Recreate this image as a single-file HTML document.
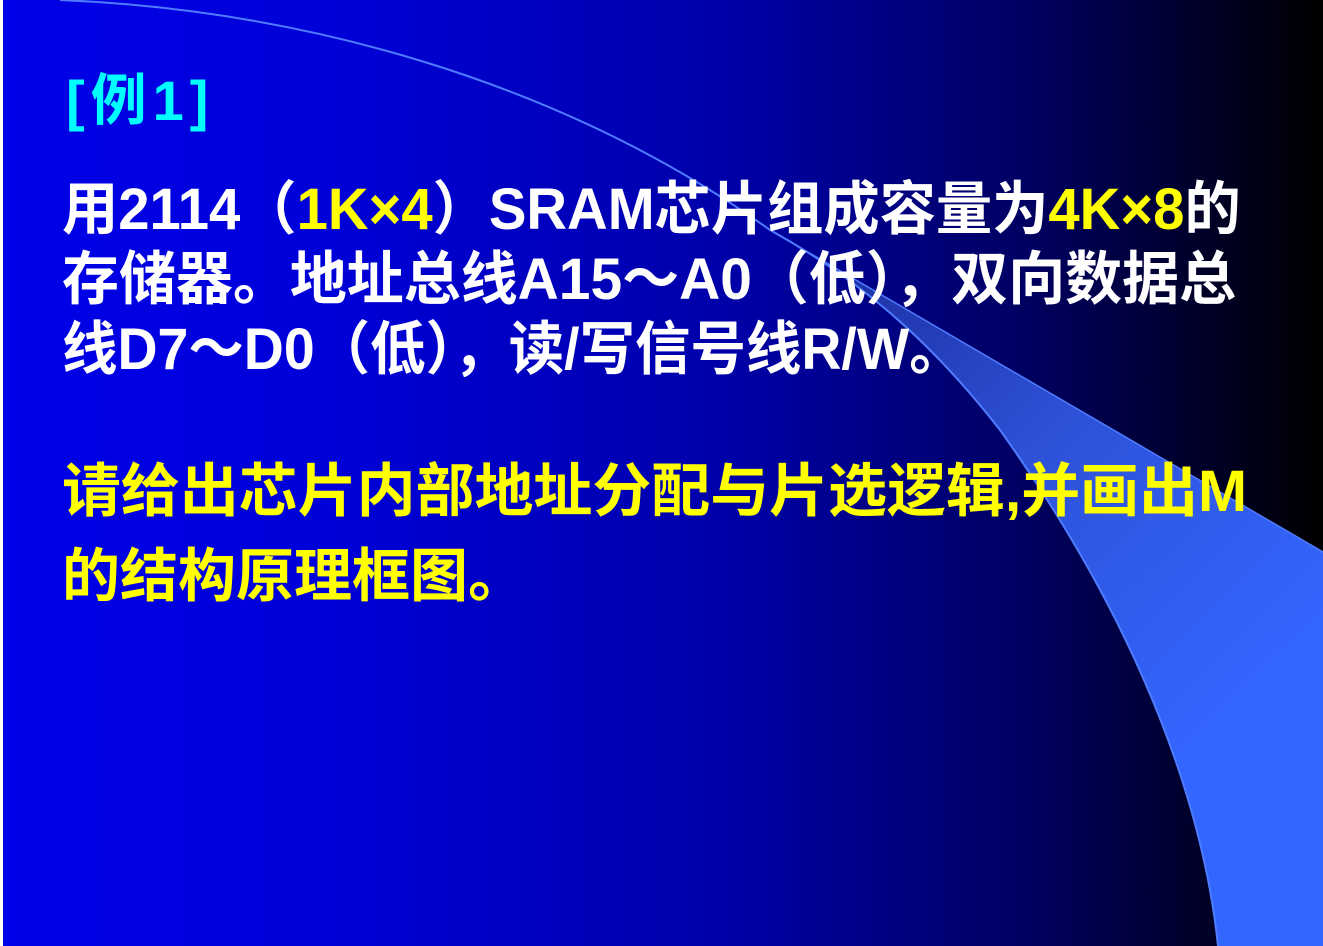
<!DOCTYPE html>
<html><head><meta charset="utf-8"><style>
html,body{margin:0;padding:0}
body{width:1323px;height:946px;position:relative;overflow:hidden;background:#fff}
#bg{position:absolute;left:3px;top:0;width:1320px;height:946px;background:linear-gradient(90deg,#0000e8 0%,#0000d8 25%,#0000a8 55%,#000060 78%,#000000 100%)}
.t{position:absolute;left:62px;white-space:nowrap;font-family:"Liberation Sans","Noto Sans CJK SC",sans-serif;font-weight:bold;line-height:70px;transform-origin:0 50%}
.w{color:#fff;font-size:58px}
.y{color:#ffff00}
.c{color:#00ffff}
</style></head><body>
<div id="bg"></div>
<svg style="position:absolute;left:0;top:0" width="1323" height="946">
<defs><linearGradient id="g" x1="800" y1="240" x2="1250" y2="700" gradientUnits="userSpaceOnUse">
<stop offset="0" stop-color="#1a2a9a"/><stop offset="0.5" stop-color="#2e52d8"/><stop offset="1" stop-color="#3366ff"/></linearGradient></defs>
<path d="M770 230 L1323 552 L1323 946 L1218 946 C1205 820 1150 640 1000 430 C930 340 860 280 770 230 Z" fill="url(#g)"/>
<path d="M60 0 C300 10 560 80 770 230 C860 280 930 340 1000 430 C1150 640 1205 820 1218 946" fill="none" stroke="#4f7cff" stroke-width="2"/>
<path d="M770 230 L1323 552" fill="none" stroke="#4f7cff" stroke-width="1.5"/>
</svg>
<div class="t c" style="top:66px;font-size:56px;left:66px;letter-spacing:6px">[例1]</div>
<div class="t w" style="top:175px;transform:scaleX(0.97)">用2114（<span class="y">1K×4</span>）SRAM芯片组成容量为<span class="y">4K×8</span>的</div>
<div class="t w" style="top:245px;transform:scaleX(0.982)">存储器。地址总线A15～A0（低），双向数据总</div>
<div class="t w" style="top:315px;transform:scaleX(0.956)">线D7～D0（低），读/写信号线R/W。</div>
<div class="t y" style="top:457px;font-size:58px;transform:scaleX(1.016)">请给出芯片内部地址分配与片选逻辑,并画出M</div>
<div class="t y" style="top:542px;font-size:58px">的结构原理框图。</div>
</body></html>
